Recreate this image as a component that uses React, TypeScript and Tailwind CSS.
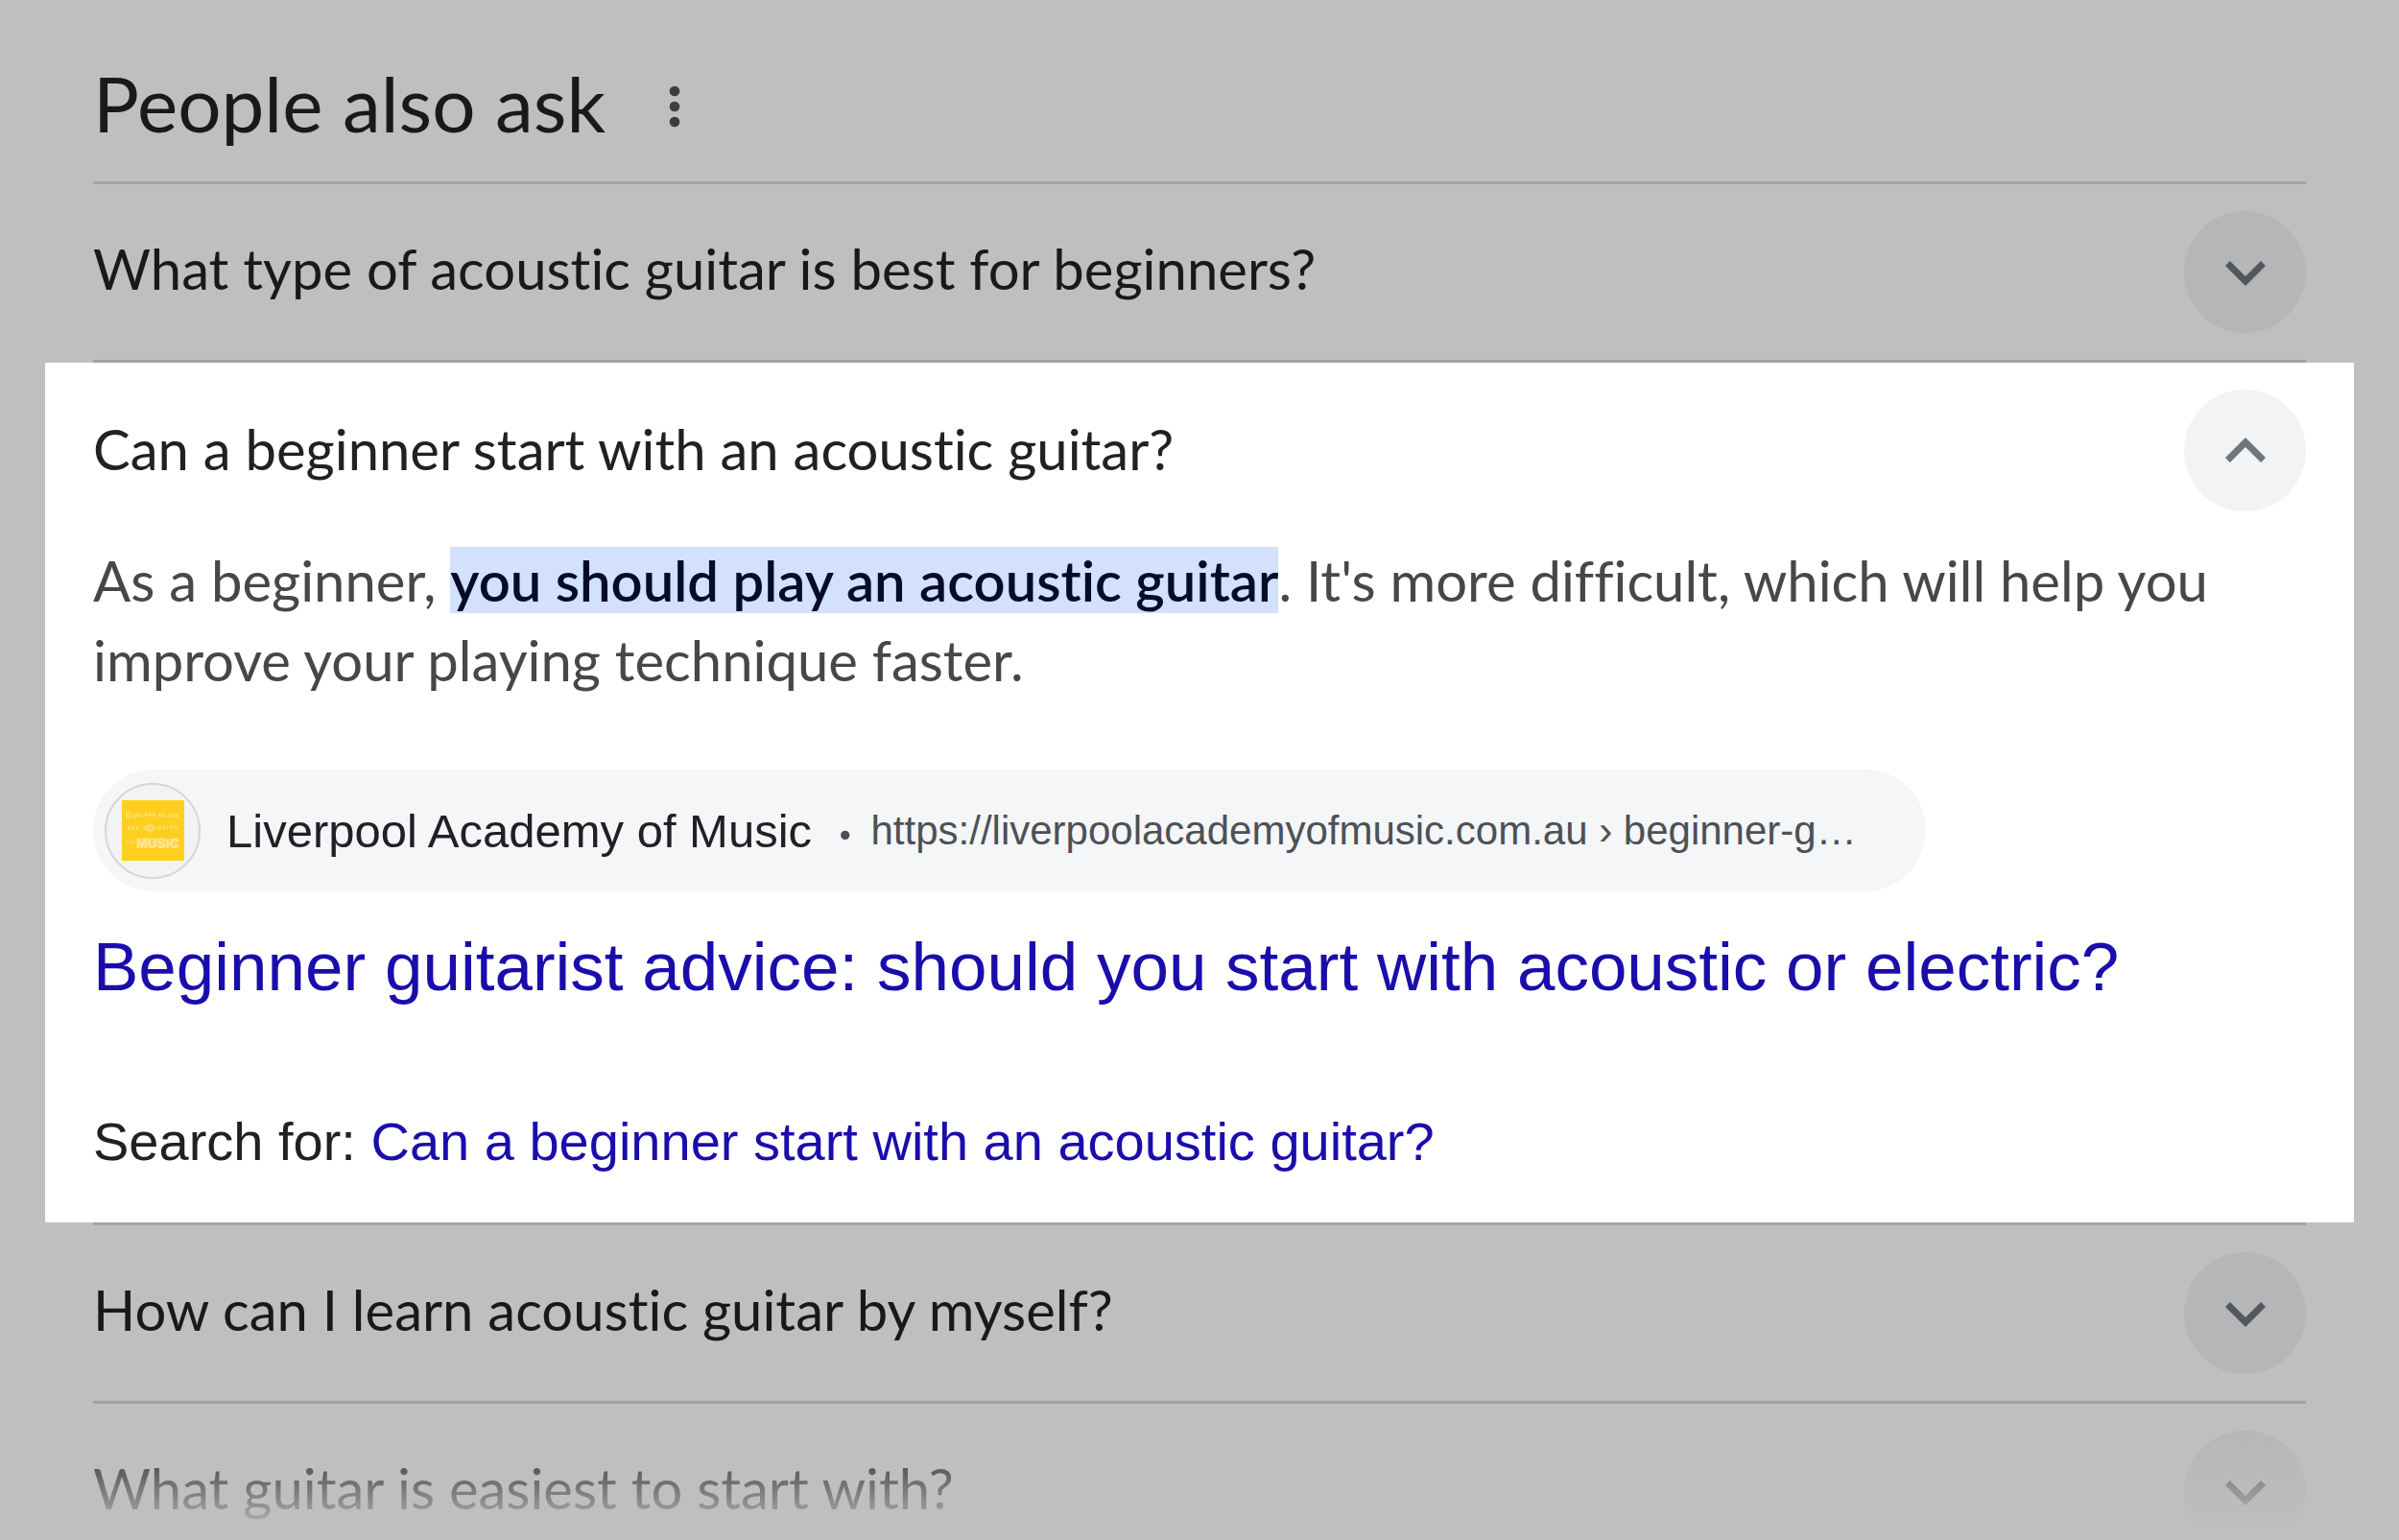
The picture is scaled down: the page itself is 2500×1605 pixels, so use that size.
import React, { useState } from 'react';

interface Source {
  site: string;
  url: string;
  title: string;
}

interface Question {
  id: string;
  text: string;
}

const source: Source = {
  site: 'Liverpool Academy of Music',
  url: 'https://liverpoolacademyofmusic.com.au › beginner-g…',
  title: 'Beginner guitarist advice: should you start with acoustic or electric?'
};

const questions: Record<string, Question> = {
  type: { id: 'type', text: 'What type of acoustic guitar is best for beginners?' },
  start: { id: 'start', text: 'Can a beginner start with an acoustic guitar?' },
  learn: { id: 'learn', text: 'How can I learn acoustic guitar by myself?' },
  easiest: { id: 'easiest', text: 'What guitar is easiest to start with?' }
};

function MoreIcon() {
  return (
    <svg viewBox="0 0 24 24" className="h-16 w-16" fill="currentColor" aria-hidden="true">
      <circle cx="12" cy="6" r="2" />
      <circle cx="12" cy="12" r="2" />
      <circle cx="12" cy="18" r="2" />
    </svg>
  );
}

function Chevron({ up }: { up: boolean }) {
  return (
    <svg viewBox="0 0 24 24" className="h-[84px] w-[84px]" fill="currentColor" aria-hidden="true">
      {up ? (
        <path d="M12 8l-6 6 1.41 1.41L12 10.83l4.59 4.58L18 14z" />
      ) : (
        <path d="M16.59 8.59L12 13.17 7.41 8.59 6 10l6 6 6-6z" />
      )}
    </svg>
  );
}

function SiteIcon() {
  return (
    <span className="flex h-[100px] w-[100px] shrink-0 items-center justify-center rounded-full border-2 border-[#d5d6d8] bg-[#f1f3f4]">
      <svg viewBox="0 0 65 63" className="h-[63px] w-[65px]" aria-hidden="true">
        <rect width="65" height="63" fill="#ffcf20" />
        <g fill="none" stroke="#fbdc62" strokeWidth="4">
          <path d="M4 15.5h5" strokeWidth="7" />
          <path d="M11 16h10M24 15h12M38 16h8M48 16h11" strokeDasharray="3 1" />
          <path d="M6 29h12M38 28.5h10M50 28h9" strokeDasharray="3 1.5" />
          <path d="M24 29l5-3 5 3-5 3z" strokeWidth="3" />
          <path d="M5 44h8" strokeWidth="3" strokeDasharray="2 1" />
        </g>
        <path d="M16 39h27l3 2 12-2v10H16z" fill="#fbd951" />
        <text x="15" y="50" fill="#fbe89a" fontFamily="Liberation Sans, Arial, sans-serif" fontSize="14" fontWeight="700">
          MUSIC
        </text>
      </svg>
    </span>
  );
}

interface QuestionRowProps {
  question: Question;
  open?: boolean;
  onToggle?: () => void;
}

function QuestionRow({ question, open = false, onToggle }: QuestionRowProps) {
  return (
    <button
      type="button"
      aria-expanded={open}
      onClick={onToggle}
      className="flex h-[183px] w-full cursor-pointer items-center justify-between text-left"
    >
      <span className={`text-[58px] leading-[72px] ${open ? 'pb-1 text-[#202124]' : 'pb-2 text-[#18191b]'}`}>
        {question.text}
      </span>
      <span
        className={`flex h-[127px] w-[127px] shrink-0 items-center justify-center rounded-full ${
          open ? 'bg-[#f1f3f4] text-[#70757a]' : 'bg-[#b5b6b7] text-[#54575b]'
        }`}
      >
        <Chevron up={open} />
      </span>
    </button>
  );
}

export default function App() {
  const [open, setOpen] = useState(true);

  return (
    <main className="min-h-screen bg-[#bfbfbf] font-['Lato','Open_Sans',sans-serif] [font-variant-ligatures:none]">
      <header className="mx-[97px] flex h-[189px] items-center gap-10 pt-6">
        <h1 className="text-[80px] leading-[96px] text-[#18191b]">People also ask</h1>
        <button type="button" aria-label="About this result" className="pt-2 text-[#3c3d3f]">
          <MoreIcon />
        </button>
      </header>

      <div className="mx-[97px] border-y-[3px] border-[#a2a3a6]">
        <QuestionRow question={questions.type} />
      </div>

      <section className="mx-[47px] bg-white px-[50px] pb-[50px]">
        <QuestionRow question={questions.start} open={open} onToggle={() => setOpen(!open)} />
        {open && (
          <div className="pt-0.5">
            <p className="text-[58px] leading-[83px] text-[#474747]">
              As a beginner,{' '}
              <mark className="bg-[#d3e1fd] font-semibold text-[#040c28]">you should play an acoustic guitar</mark>
              . It's more difficult, which will help you improve your playing technique faster.
            </p>

            <div className="font-['Liberation_Sans',Arial,sans-serif]">
              <a
                href="#source"
                className="mt-[73px] inline-flex h-[127px] items-center rounded-full bg-[#f4f6f8] pl-3 pr-[72px] align-top"
              >
                <SiteIcon />
                <span className="ml-[27px] text-[49px] leading-[60px] text-[#202124]">{source.site}</span>
                <span className="ml-7 mr-5 font-['Lato'] text-[49px] font-bold leading-[60px] text-[#4d5156]">·</span>
                <span className="text-[42px] leading-[60px] text-[#4d5156]">{source.url}</span>
              </a>
              <h2 className="mt-[34px] text-[71px] leading-[90px] text-[#1a0dab]">
                <a href="#source">{source.title}</a>
              </h2>
              <p className="mt-[103px] text-[56px] leading-[68px] text-[#202124]">
                Search for:{' '}
                <a href="#search" className="text-[#1a0dab]">
                  {questions.start.text}
                </a>
              </p>
            </div>
          </div>
        )}
      </section>

      <div className="mx-[97px] border-y-[3px] border-[#a2a3a6]">
        <QuestionRow question={questions.learn} />
      </div>

      {/* last row fades out at the bottom edge */}
      <div className="relative mx-[97px] h-[142px] overflow-hidden">
        <QuestionRow question={questions.easiest} />
        <div className="pointer-events-none absolute inset-0 bg-gradient-to-b from-transparent from-15% to-[#bfbfbf] to-97%" />
      </div>
    </main>
  );
}
